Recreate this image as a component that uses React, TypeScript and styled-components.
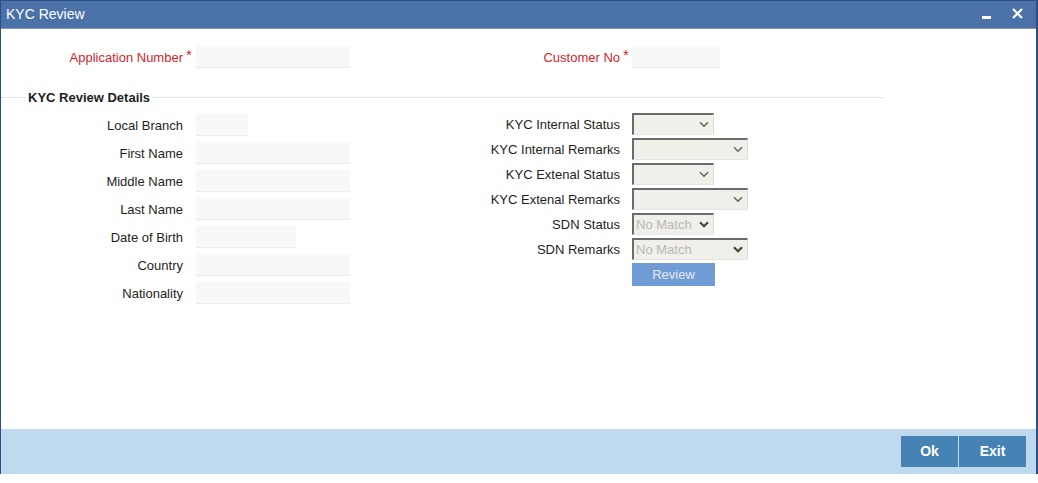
import React from 'react';
import styled, { createGlobalStyle } from 'styled-components';

const GlobalStyle = createGlobalStyle`
  html, body {
    margin: 0;
    padding: 0;
    background: #fff;
  }
  body {
    font-family: 'Liberation Sans', Arial, sans-serif;
  }
`;

const Window = styled.div`
  width: 1038px;
  height: 474px;
  box-sizing: border-box;
  display: flex;
  flex-direction: column;
  border-top: 1px solid #2c4f83;
  border-left: 1px solid #2c4f83;
  border-right: 2px solid #2c4f83;
  background: #fff;
`;

const TitleBar = styled.div`
  height: 28px;
  box-sizing: border-box;
  flex-shrink: 0;
  display: flex;
  align-items: center;
  padding: 0 13px 2px 5px;
  background: #4a72a8;
  border-bottom: 1px solid #8497ab;
`;

const Title = styled.span`
  color: #fff;
  font-size: 14px;
`;

const WindowControls = styled.div`
  margin-left: auto;
  display: flex;
  align-items: center;
  gap: 21px;
`;

const MinimizeBar = styled.span`
  display: block;
  width: 9px;
  height: 3px;
  margin-top: 8px;
  background: #fff;
`;

const Body = styled.div`
  flex: 1;
  padding-top: 17px;
`;

const TwoColumns = styled.div`
  display: grid;
  grid-template-columns: 400px auto;
  align-items: start;
`;

const FieldRow = styled.div<{ $labelWidth: number; $gap: number }>`
  display: grid;
  grid-template-columns: ${(p) => p.$labelWidth}px ${(p) => p.$gap}px auto;
  align-items: center;
  height: 22px;
`;

const Label = styled.label<{ $required?: boolean }>`
  text-align: right;
  font-size: 13px;
  padding-top: 1px;
  color: ${(p) => (p.$required ? '#d21f2c' : '#1e1e1e')};
  white-space: nowrap;
`;

const Star = styled.span`
  align-self: start;
  padding: 1px 0 0 3px;
  color: #d21f2c;
  font-size: 15px;
  line-height: 15px;
`;

const TextInput = styled.input<{ $width: number }>`
  width: ${(p) => p.$width}px;
  height: 22px;
  box-sizing: border-box;
  border: none;
  border-bottom: 1px solid #ebebeb;
  background: #f8f8f8;
  padding: 0 3px;
  font: 13px 'Liberation Sans', Arial, sans-serif;
  outline: none;
`;

const Fieldset = styled.fieldset`
  width: 883px;
  box-sizing: border-box;
  margin: 22px 0 0 0;
  padding: 8px 0 0 0;
  border: none;
  border-top: 1px solid #e6e6e6;
`;

const Legend = styled.legend`
  margin-left: 25px;
  padding: 0 2px;
  font-size: 13px;
  font-weight: bold;
  line-height: 15px;
  color: #1e1e1e;
`;

const Column = styled.div<{ $gap: number; $offset?: number }>`
  display: flex;
  flex-direction: column;
  gap: ${(p) => p.$gap}px;
  margin-top: ${(p) => p.$offset || 0}px;
`;

const SelectBox = styled.div<{ $width: number }>`
  width: ${(p) => p.$width}px;
  height: 22px;
  box-sizing: border-box;
  display: flex;
  align-items: center;
  background: #f0efea;
  border-top: 2px solid #6b6b6b;
  border-left: 2px solid #6b6b6b;
  border-right: 1px solid #dedede;
  border-bottom: 1px solid #e4e4e4;
  padding-right: 4px;
`;

const NativeSelect = styled.select<{ $disabled?: boolean }>`
  appearance: none;
  flex: 1;
  min-width: 0;
  height: 100%;
  border: none;
  background: transparent;
  padding: 0 0 1px 2px;
  font: 13px 'Liberation Sans', Arial, sans-serif;
  color: ${(p) => (p.$disabled ? '#a2a2a2' : '#222')};
  outline: none;
`;

const ReviewButton = styled.button`
  width: 83px;
  height: 23px;
  border: none;
  background: #6f9cd4;
  color: #e3e9f2;
  font: 13px 'Liberation Sans', Arial, sans-serif;
  padding: 0 0 1px;
`;

const Footer = styled.div`
  height: 44px;
  flex-shrink: 0;
  display: flex;
  justify-content: flex-end;
  align-items: center;
  gap: 1px;
  padding: 0 10px 1px 0;
  background: #bfdaee;
`;

const FooterButton = styled.button<{ $width: number }>`
  width: ${(p) => p.$width}px;
  height: 31px;
  border: none;
  background: #4682b4;
  color: #fff;
  font: bold 14px 'Liberation Sans', Arial, sans-serif;
  padding: 0;
`;

const Chevron = ({ bold }: { bold?: boolean }) => (
  <svg width="10" height="7" viewBox="0 0 10 7" style={{ flexShrink: 0 }}>
    <path
      d="M1 1.2 L5 5.2 L9 1.2"
      fill="none"
      stroke={bold ? '#444' : '#666'}
      strokeWidth={bold ? 2.2 : 1.6}
    />
  </svg>
);

const Select = ({ width, value }: { width: number; value?: string }) => (
  <SelectBox $width={width}>
    <NativeSelect $disabled={!!value} disabled={!!value} defaultValue={value || ''}>
      <option value={value || ''}>{value || ''}</option>
    </NativeSelect>
    <Chevron bold={!!value} />
  </SelectBox>
);

const leftFields = [
  { label: 'Local Branch', width: 52 },
  { label: 'First Name', width: 154 },
  { label: 'Middle Name', width: 154 },
  { label: 'Last Name', width: 154 },
  { label: 'Date of Birth', width: 100 },
  { label: 'Country', width: 154 },
  { label: 'Nationality', width: 154 },
];

const rightFields = [
  { label: 'KYC Internal Status', width: 82 },
  { label: 'KYC Internal Remarks', width: 116 },
  { label: 'KYC Extenal Status', width: 82 },
  { label: 'KYC Extenal Remarks', width: 116 },
  { label: 'SDN Status', width: 82, value: 'No Match' },
  { label: 'SDN Remarks', width: 116, value: 'No Match' },
];

const App = () => {
  return (
    <>
      <GlobalStyle />
      <Window>
        <TitleBar>
          <Title>KYC Review</Title>
          <WindowControls>
            <MinimizeBar />
            <svg width="11" height="11" viewBox="0 0 11 11">
              <path d="M1 1 L10 10 M10 1 L1 10" stroke="#fff" strokeWidth="2.2" />
            </svg>
          </WindowControls>
        </TitleBar>

        <Body>
          <TwoColumns>
            <FieldRow $labelWidth={182} $gap={13}>
              <Label $required>Application Number</Label>
              <Star>*</Star>
              <TextInput $width={154} />
            </FieldRow>
            <FieldRow $labelWidth={219} $gap={12}>
              <Label $required>Customer No</Label>
              <Star>*</Star>
              <TextInput $width={88} />
            </FieldRow>
          </TwoColumns>

          <Fieldset>
            <Legend>KYC Review Details</Legend>
            <TwoColumns>
              <Column $gap={6} $offset={1}>
                {leftFields.map((f) => (
                  <FieldRow key={f.label} $labelWidth={182} $gap={13}>
                    <Label>{f.label}</Label>
                    <span />
                    <TextInput $width={f.width} />
                  </FieldRow>
                ))}
              </Column>
              <Column $gap={3}>
                {rightFields.map((f) => (
                  <FieldRow key={f.label} $labelWidth={219} $gap={12}>
                    <Label>{f.label}</Label>
                    <span />
                    <Select width={f.width} value={f.value} />
                  </FieldRow>
                ))}
                <FieldRow $labelWidth={219} $gap={12}>
                  <span />
                  <span />
                  <ReviewButton>Review</ReviewButton>
                </FieldRow>
              </Column>
            </TwoColumns>
          </Fieldset>
        </Body>

        <Footer>
          <FooterButton $width={57}>Ok</FooterButton>
          <FooterButton $width={67}>Exit</FooterButton>
        </Footer>
      </Window>
    </>
  );
};

export default App;
